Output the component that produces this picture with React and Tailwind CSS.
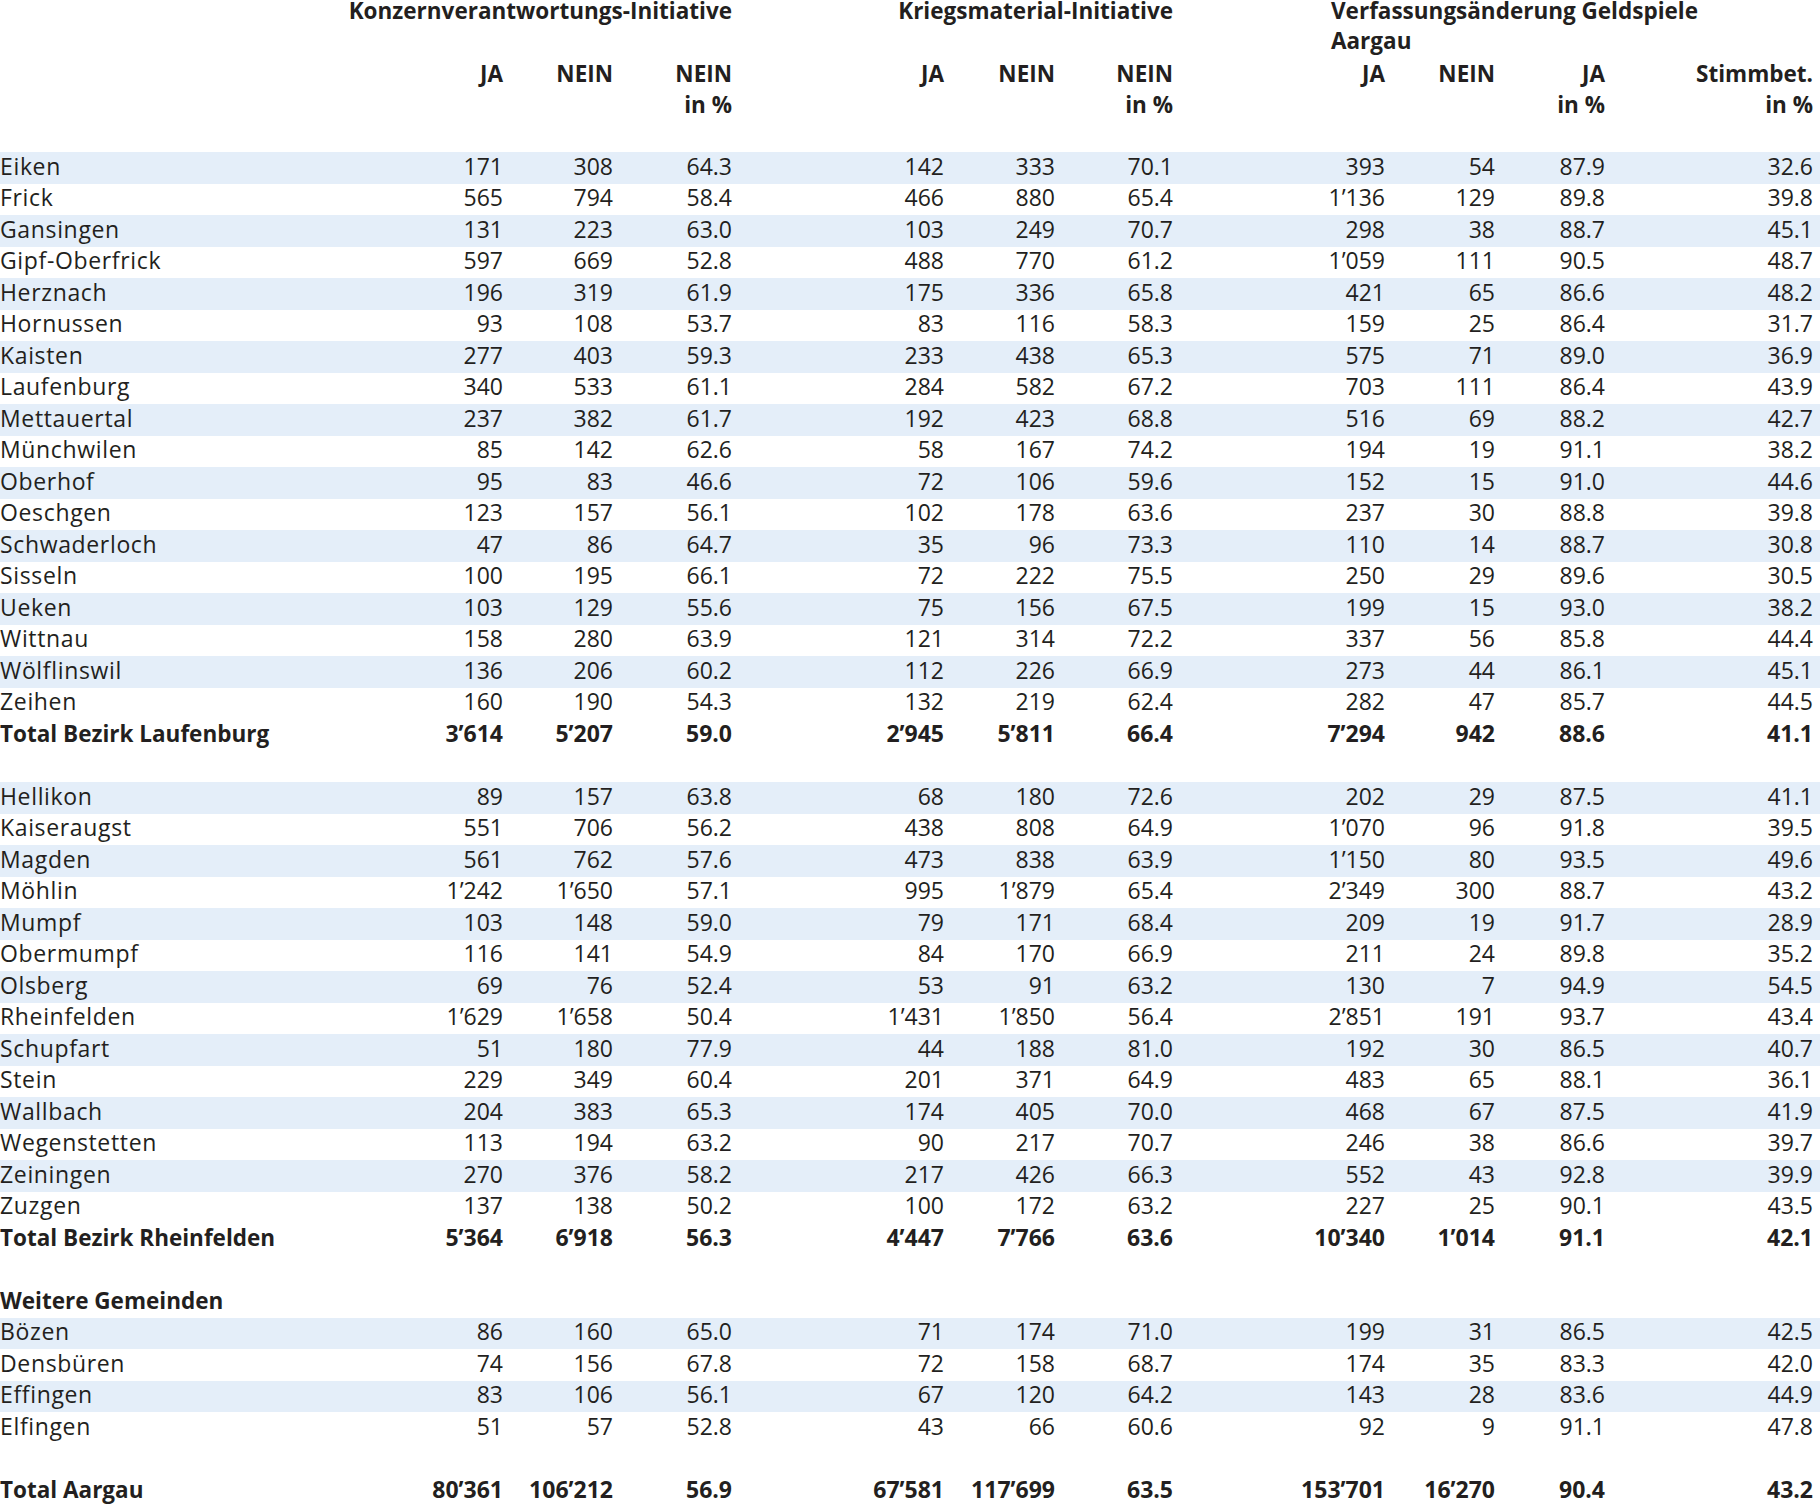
import React from "react";

const COLS =
  "grid grid-cols-[393px_110px_110px_119px_212px_111px_118px_212px_110px_110px_208px]";

const sections = [
  {
    rows: [
      ["Eiken", "171", "308", "64.3", "142", "333", "70.1", "393", "54", "87.9", "32.6"],
      ["Frick", "565", "794", "58.4", "466", "880", "65.4", "1’136", "129", "89.8", "39.8"],
      ["Gansingen", "131", "223", "63.0", "103", "249", "70.7", "298", "38", "88.7", "45.1"],
      ["Gipf-Oberfrick", "597", "669", "52.8", "488", "770", "61.2", "1’059", "111", "90.5", "48.7"],
      ["Herznach", "196", "319", "61.9", "175", "336", "65.8", "421", "65", "86.6", "48.2"],
      ["Hornussen", "93", "108", "53.7", "83", "116", "58.3", "159", "25", "86.4", "31.7"],
      ["Kaisten", "277", "403", "59.3", "233", "438", "65.3", "575", "71", "89.0", "36.9"],
      ["Laufenburg", "340", "533", "61.1", "284", "582", "67.2", "703", "111", "86.4", "43.9"],
      ["Mettauertal", "237", "382", "61.7", "192", "423", "68.8", "516", "69", "88.2", "42.7"],
      ["Münchwilen", "85", "142", "62.6", "58", "167", "74.2", "194", "19", "91.1", "38.2"],
      ["Oberhof", "95", "83", "46.6", "72", "106", "59.6", "152", "15", "91.0", "44.6"],
      ["Oeschgen", "123", "157", "56.1", "102", "178", "63.6", "237", "30", "88.8", "39.8"],
      ["Schwaderloch", "47", "86", "64.7", "35", "96", "73.3", "110", "14", "88.7", "30.8"],
      ["Sisseln", "100", "195", "66.1", "72", "222", "75.5", "250", "29", "89.6", "30.5"],
      ["Ueken", "103", "129", "55.6", "75", "156", "67.5", "199", "15", "93.0", "38.2"],
      ["Wittnau", "158", "280", "63.9", "121", "314", "72.2", "337", "56", "85.8", "44.4"],
      ["Wölflinswil", "136", "206", "60.2", "112", "226", "66.9", "273", "44", "86.1", "45.1"],
      ["Zeihen", "160", "190", "54.3", "132", "219", "62.4", "282", "47", "85.7", "44.5"],
    ],
    total: ["Total Bezirk Laufenburg", "3’614", "5’207", "59.0", "2’945", "5’811", "66.4", "7’294", "942", "88.6", "41.1"],
  },
  {
    rows: [
      ["Hellikon", "89", "157", "63.8", "68", "180", "72.6", "202", "29", "87.5", "41.1"],
      ["Kaiseraugst", "551", "706", "56.2", "438", "808", "64.9", "1’070", "96", "91.8", "39.5"],
      ["Magden", "561", "762", "57.6", "473", "838", "63.9", "1’150", "80", "93.5", "49.6"],
      ["Möhlin", "1’242", "1’650", "57.1", "995", "1’879", "65.4", "2’349", "300", "88.7", "43.2"],
      ["Mumpf", "103", "148", "59.0", "79", "171", "68.4", "209", "19", "91.7", "28.9"],
      ["Obermumpf", "116", "141", "54.9", "84", "170", "66.9", "211", "24", "89.8", "35.2"],
      ["Olsberg", "69", "76", "52.4", "53", "91", "63.2", "130", "7", "94.9", "54.5"],
      ["Rheinfelden", "1’629", "1’658", "50.4", "1’431", "1’850", "56.4", "2’851", "191", "93.7", "43.4"],
      ["Schupfart", "51", "180", "77.9", "44", "188", "81.0", "192", "30", "86.5", "40.7"],
      ["Stein", "229", "349", "60.4", "201", "371", "64.9", "483", "65", "88.1", "36.1"],
      ["Wallbach", "204", "383", "65.3", "174", "405", "70.0", "468", "67", "87.5", "41.9"],
      ["Wegenstetten", "113", "194", "63.2", "90", "217", "70.7", "246", "38", "86.6", "39.7"],
      ["Zeiningen", "270", "376", "58.2", "217", "426", "66.3", "552", "43", "92.8", "39.9"],
      ["Zuzgen", "137", "138", "50.2", "100", "172", "63.2", "227", "25", "90.1", "43.5"],
    ],
    total: ["Total Bezirk Rheinfelden", "5’364", "6’918", "56.3", "4’447", "7’766", "63.6", "10’340", "1’014", "91.1", "42.1"],
  },
  {
    title: "Weitere Gemeinden",
    rows: [
      ["Bözen", "86", "160", "65.0", "71", "174", "71.0", "199", "31", "86.5", "42.5"],
      ["Densbüren", "74", "156", "67.8", "72", "158", "68.7", "174", "35", "83.3", "42.0"],
      ["Effingen", "83", "106", "56.1", "67", "120", "64.2", "143", "28", "83.6", "44.9"],
      ["Elfingen", "51", "57", "52.8", "43", "66", "60.6", "92", "9", "91.1", "47.8"],
    ],
  },
];

const grandTotal = ["Total Aargau", "80’361", "106’212", "56.9", "67’581", "117’699", "63.5", "153’701", "16’270", "90.4", "43.2"];

function Row({ cells, striped, bold }) {
  return (
    <div
      className={`${COLS} h-[31.5px] items-center pb-[3px] leading-[27px] ${
        striped ? "bg-[#e4eef9]" : ""
      } ${bold ? "font-bold" : ""}`}
    >
      {cells.map((c, i) =>
        i === 0 ? (
          <div
            key={i}
            className={
              bold
                ? "whitespace-nowrap text-[22.5px]"
                : "whitespace-nowrap tracking-[0.65px]"
            }
          >
            {c}
          </div>
        ) : (
          <div key={i} className="text-right whitespace-nowrap">
            {c}
          </div>
        )
      )}
    </div>
  );
}

function Blank() {
  return <div className="h-[31.5px]" />;
}

export default function App() {
  return (
    <div className="w-[1820px] h-[1504px] overflow-hidden bg-white">
      <div className="font-['Open_Sans',sans-serif] text-[23px] text-[#231f20]">
        <div className={`${COLS} grid-rows-[26px_31.5px] font-bold text-[22.5px]`}>
          <div className="col-start-1 col-span-4 row-start-1 text-right whitespace-nowrap leading-[21px]">
            Konzernverantwortungs-Initiative
          </div>
          <div className="col-start-5 col-span-3 row-start-1 text-right whitespace-nowrap leading-[21px]">
            Kriegsmaterial-Initiative
          </div>
          <div className="col-start-8 col-span-4 row-start-1 row-span-2 pl-[158px] whitespace-nowrap">
            <div className="h-[26px] leading-[21px]">Verfassungsänderung Geldspiele</div>
            <div className="leading-[29px]">Aargau</div>
          </div>
        </div>
        <div className={`${COLS} h-[31.5px] leading-[31.5px] font-bold text-[22.5px]`}>
          <div />
          <div className="text-right">JA</div>
          <div className="text-right">NEIN</div>
          <div className="text-right">NEIN</div>
          <div className="text-right">JA</div>
          <div className="text-right">NEIN</div>
          <div className="text-right">NEIN</div>
          <div className="text-right">JA</div>
          <div className="text-right">NEIN</div>
          <div className="text-right">JA</div>
          <div className="text-right">Stimmbet.</div>
        </div>
        <div className={`${COLS} h-[31.5px] leading-[31.5px] font-bold text-[22.5px]`}>
          <div />
          <div />
          <div />
          <div className="text-right">in %</div>
          <div />
          <div />
          <div className="text-right">in %</div>
          <div />
          <div />
          <div className="text-right">in %</div>
          <div className="text-right">in %</div>
        </div>
        <Blank />
        {sections.map((s, si) => (
          <React.Fragment key={si}>
            {s.title && (
              <div className="h-[31.5px] pb-[3px] leading-[27px] flex items-center font-bold text-[22.5px] whitespace-nowrap">
                {s.title}
              </div>
            )}
            {s.rows.map((r, ri) => (
              <Row key={ri} cells={r} striped={ri % 2 === 0} />
            ))}
            {s.total && <Row cells={s.total} bold />}
            <Blank />
          </React.Fragment>
        ))}
        <Row cells={grandTotal} bold />
      </div>
    </div>
  );
}
